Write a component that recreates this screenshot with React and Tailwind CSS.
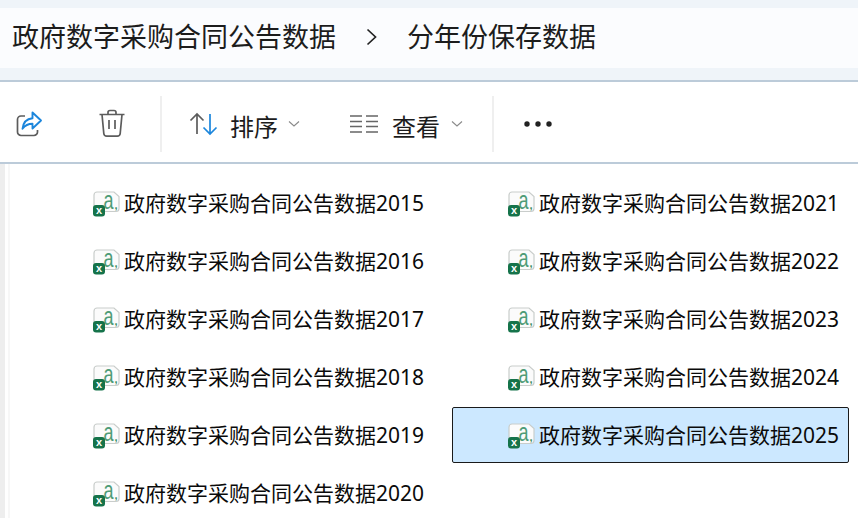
const FONT = '"Noto Sans", "Noto Sans CJK SC", sans-serif';

const files = [
  { year: 2015 },
  { year: 2016 },
  { year: 2017 },
  { year: 2018 },
  { year: 2019 },
  { year: 2020 },
  { year: 2021 },
  { year: 2022 },
  { year: 2023 },
  { year: 2024 },
  { year: 2025, selected: true },
];

function ExcelIcon() {
  return (
    <svg width="27" height="28" viewBox="0 0 27 28" className="shrink-0 overflow-visible">
      <path d="M4 3H21l5 4.500V19.500a3 3 0 0 1-3 3H4a3 3 0 0 1-3-3V6a3 3 0 0 1 3-3z" fill="#fbfbfb" stroke="#c9cdcb" strokeWidth="1.200" />
      <text x="0" y="0" transform="translate(10.500 20) scale(1 1.400)" fontSize="18" fontFamily="Liberation Sans, sans-serif" fill="#4f9c77">a</text>
      <text x="21.500" y="20" fontSize="11" fontWeight="700" fontFamily="Liberation Sans, sans-serif" fill="#3f8f63">,</text>
      <rect x="0" y="16" width="12" height="11.500" rx="3" fill="#15734a" />
      <text x="6" y="25" textAnchor="middle" fontSize="11" fontWeight="700" fontFamily="Liberation Sans, sans-serif" fill="#ffffff">x</text>
    </svg>
  );
}

function Chevron() {
  return (
    <svg width="12" height="8" viewBox="0 0 12 8" className="shrink-0">
      <path d="M1 1.500L6 6l5-4.500" fill="none" stroke="#8a8a8a" strokeWidth="1.100" />
    </svg>
  );
}

function Divider() {
  return <div className="w-[2px] h-[56px] bg-[#efefef] shrink-0" />;
}

function FileRow({ year, selected }) {
  return (
    <div
      className={`flex items-center h-[56px] w-[397px] ${
        selected ? "bg-[#cce8ff] border border-[#1a1a1a] rounded-[2px] pl-[55px]" : "pl-[56px]"
      }`}
    >
      <ExcelIcon />
      <span className="ml-[4px] text-[21px] leading-none text-[#0a0a0a] whitespace-nowrap">
        政府数字采购合同公告数据{year}
      </span>
    </div>
  );
}

export default function App() {
  return (
    <div className="w-[858px] h-[518px] overflow-hidden bg-white" style={{ fontFamily: FONT }}>
      {/* Address bar */}
      <div className="h-[82px] bg-[#eff4f9] pt-[8px] border-b-2 border-[#bccbd9]">
        <div className="h-[60px] bg-[#fbfcfe] flex items-center pl-[12px] pb-[3px] text-[27px] leading-none text-[#1c1c1c]">
          <span>政府数字采购合同公告数据</span>
          <svg width="14" height="20" viewBox="0 0 14 20" className="ml-[29px] mr-[28px]">
            <path d="M2.500 2.500L10.500 10l-8 7.500" fill="none" stroke="#222" strokeWidth="1.700" />
          </svg>
          <span>分年份保存数据</span>
        </div>
      </div>

      {/* Toolbar */}
      <div className="h-[82px] pt-[4px] border-b-2 border-[#bccbd9] flex items-center">
        <svg width="28" height="28" viewBox="0 0 28 28" className="ml-[15px] shrink-0">
          <path d="M10 6H6a3.500 3.500 0 0 0-3.500 3.500V22A3.500 3.500 0 0 0 6 25.500h13a3.500 3.500 0 0 0 3.500-3.500v-2" fill="none" stroke="#5c5c5c" strokeWidth="1.700" />
          <path d="M17.500 2.500L26 10.500l-8.500 8v-4.700c-4.500 0-7.500 1.700-10 5 .6-6 4.200-10 10-10.600z" fill="#fff" stroke="#1c86dc" strokeWidth="1.900" strokeLinejoin="round" />
        </svg>
        <svg width="28" height="30" viewBox="0 0 28 30" className="ml-[55px] shrink-0">
          <path d="M1.500 5.500h25M10 5V3.500A2 2 0 0 1 12 1.500h4a2 2 0 0 1 2 2V5" fill="none" stroke="#5c5c5c" strokeWidth="1.700" />
          <path d="M4 5.500l1.800 19a3 3 0 0 0 3 2.700h10.400a3 3 0 0 0 3-2.700L24 5.500" fill="none" stroke="#5c5c5c" strokeWidth="1.700" />
          <path d="M11 11v9M17 11v9" stroke="#5c5c5c" strokeWidth="1.700" />
        </svg>
        <div className="ml-[34px]"><Divider /></div>
        <svg width="30" height="24" viewBox="0 0 30 24" className="ml-[27px] shrink-0">
          <path d="M8 22V2M1.500 8.500L8 2l6.500 6.500" fill="none" stroke="#5c5c5c" strokeWidth="1.700" />
          <path d="M21 2v20M14.500 15.500L21 22l6.500-6.500" fill="none" stroke="#1c86dc" strokeWidth="1.700" />
        </svg>
        <span className="ml-[11px] mt-[5px] text-[24px] leading-none text-[#1c1c1c]">排序</span>
        <div className="ml-[10px]"><Chevron /></div>
        <svg width="28" height="18" viewBox="0 0 28 18" className="ml-[50px] shrink-0">
          <path d="M0 1h12M16 1h12M0 6.500h12M16 6.500h12M0 11.500h12M16 11.500h12M0 17h12M16 17h12" stroke="#666" strokeWidth="1.500" />
        </svg>
        <span className="ml-[14px] mt-[5px] text-[24px] leading-none text-[#1c1c1c]">查看</span>
        <div className="ml-[11px]"><Chevron /></div>
        <div className="ml-[29px]"><Divider /></div>
        <svg width="28" height="6" viewBox="0 0 28 6" className="ml-[30px] shrink-0">
          <circle cx="3" cy="3" r="2.700" fill="#222" />
          <circle cx="14" cy="3" r="2.700" fill="#222" />
          <circle cx="25" cy="3" r="2.700" fill="#222" />
        </svg>
      </div>

      {/* File list */}
      <div className="flex h-[354px]">
        <div className="w-[5px] bg-[#eeeeee]" />
        <div className="w-[3px]" />
        <div className="w-[2px] bg-[#f7f7f7]" />
        <div className="pl-[27px] pt-[11px] grid grid-cols-[397px_397px] gap-x-[18px] grid-rows-[repeat(6,56px)] gap-y-[2px] grid-flow-col">
          {files.map((f) => (
            <FileRow key={f.year} year={f.year} selected={f.selected} />
          ))}
        </div>
      </div>
    </div>
  );
}
